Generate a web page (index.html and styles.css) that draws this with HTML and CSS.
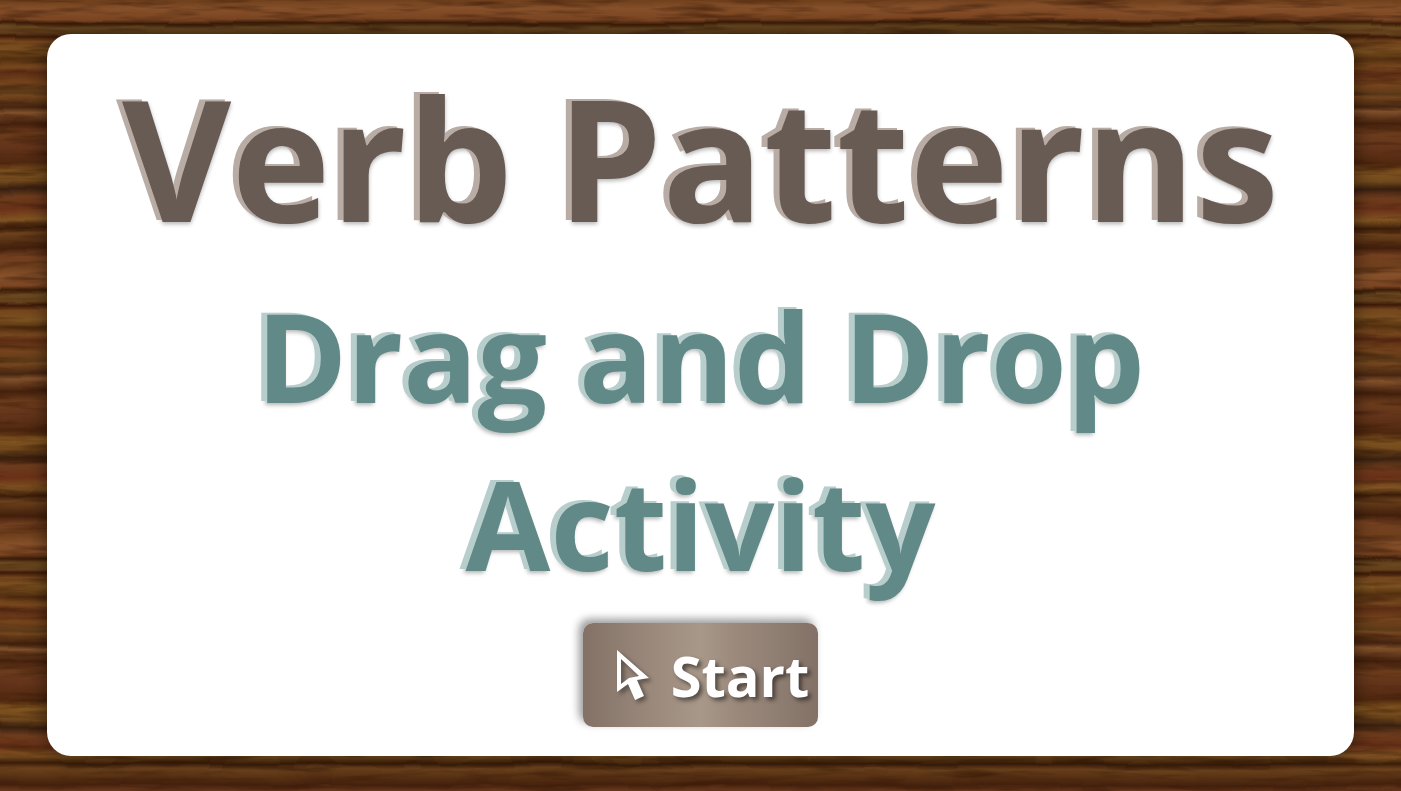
FILE: index.html
```html
<!DOCTYPE html>
<html lang="en">
<head>
<meta charset="utf-8">
<title>Verb Patterns</title>
<link rel="stylesheet" href="styles.css">
</head>
<body>
<svg class="wood" aria-hidden="true">
  <defs>
    <linearGradient id="planks" x1="0" y1="0" x2="0" y2="1">
      <stop offset="0" stop-color="#70401c"/><stop offset=".03" stop-color="#85502a"/><stop offset=".07" stop-color="#7c4622"/>
      <stop offset=".085" stop-color="#3a1c08"/><stop offset=".1" stop-color="#6c4a20"/><stop offset=".125" stop-color="#64401c"/>
      <stop offset=".137" stop-color="#3c1a08"/><stop offset=".155" stop-color="#74451c"/><stop offset=".19" stop-color="#7c5220"/>
      <stop offset=".22" stop-color="#54300f"/><stop offset=".25" stop-color="#78481e"/><stop offset=".27" stop-color="#5c2c14"/>
      <stop offset=".31" stop-color="#75441c"/><stop offset=".35" stop-color="#5c3a18"/><stop offset=".36" stop-color="#74461e"/>
      <stop offset=".40" stop-color="#462510"/><stop offset=".42" stop-color="#80502a"/><stop offset=".465" stop-color="#44200c"/>
      <stop offset=".5" stop-color="#6c3c1c"/><stop offset=".55" stop-color="#63341a"/><stop offset=".61" stop-color="#50280f"/>
      <stop offset=".64" stop-color="#80541f"/><stop offset=".68" stop-color="#70481c"/><stop offset=".71" stop-color="#382010"/>
      <stop offset=".74" stop-color="#6c3c1c"/><stop offset=".78" stop-color="#6a3118"/><stop offset=".82" stop-color="#805422"/>
      <stop offset=".85" stop-color="#3a1c08"/><stop offset=".87" stop-color="#6c421c"/><stop offset=".93" stop-color="#43200c"/>
      <stop offset=".96" stop-color="#744020"/><stop offset="1" stop-color="#70401c"/>
    </linearGradient>
    <filter id="grain" x="0" y="0" width="100%" height="100%" color-interpolation-filters="sRGB">
      <feTurbulence type="fractalNoise" baseFrequency=".015 .14" numOctaves="3" seed="7" result="noise"/>
      <feColorMatrix in="noise" type="matrix" values="0 0 0 0 .22  0 0 0 0 .1  0 0 0 0 .03  1.6 0 0 0 -.76" result="streaks"/>
      <feTurbulence type="fractalNoise" baseFrequency=".012 .02" numOctaves="2" seed="3" result="bend"/>
      <feDisplacementMap in="SourceGraphic" in2="bend" scale="7" xChannelSelector="R" yChannelSelector="G" result="waves"/>
      <feMerge><feMergeNode in="SourceGraphic"/><feMergeNode in="waves"/><feMergeNode in="streaks"/></feMerge>
    </filter>
    <pattern id="timber" width="268" height="268" patternUnits="userSpaceOnUse"><rect width="268" height="268" fill="url(#planks)"/></pattern>
  </defs>
  <rect width="100%" height="100%" fill="url(#timber)" filter="url(#grain)"/>
</svg>
<main class="card">
  <h1 class="title">Verb Patterns</h1>
  <h2 class="subtitle">Drag and Drop Activity</h2>
  <button class="start" type="button">
    <svg class="pointer" viewBox="0 0 32 50" aria-hidden="true"><path fill="#fff" fill-rule="evenodd" d="M0 0 32 28 20 30 27 46 18 50 11 34 0 42ZM4 9 4 34 12 28 22 26Z"/></svg>
    <span>Start</span>
  </button>
</main>
</body>
</html>
```
FILE: styles.css
```css
* {
  box-sizing: border-box;
}

body {
  margin: 0;
  min-height: 100vh;
  padding: 34px 47px 35px;
  display: flex;
  background: #65401f;
  font-family: "Open Sans", "Noto Sans", sans-serif;
}

.wood {
  position: fixed;
  inset: 0;
  width: 100%;
  height: 100%;
  z-index: -1;
}

.card {
  flex: 1;
  min-width: 0;
  display: flex;
  flex-direction: column;
  align-items: center;
  padding: 8px 60px 28px;
  border-radius: 24px;
  background: #fff;
  box-shadow: 0 0 20px rgba(0, 0, 0, 0.5);
  text-align: center;
}

.title,
.subtitle {
  margin: 0;
  font-weight: 700;
}

.title {
  font-size: 168px;
  line-height: 230px;
  color: #685b53;
  text-shadow: -6px -2px 0 #b8aca5, 0 2px 4px rgba(0, 0, 0, 0.3);
}

.subtitle {
  font-size: 123px;
  line-height: 168px;
  color: #608987;
  text-shadow: -6px -2px 0 #b8cecc, -2px 2px 4px rgba(0, 0, 0, 0.3);
}

.start {
  display: flex;
  align-items: center;
  gap: 22px;
  height: 104px;
  margin: 15px 0 0;
  padding: 0 9px 0 34px;
  border: 0;
  border-radius: 10px;
  background: linear-gradient(90deg, #837167, #9b8a7c 30%, #a89889 50%, #9b8a7c 65%, #837167);
  box-shadow: -4px -4px 8px rgba(0, 0, 0, 0.4);
  color: #fff;
  font: inherit;
  font-size: 56px;
  font-weight: 700;
  line-height: 76px;
  text-shadow: 3px 3px 4px rgba(0, 0, 0, 0.5);
}

.pointer {
  width: 32px;
  height: 50px;
  filter: drop-shadow(3px 3px 2px rgba(0, 0, 0, 0.4));
}
```
